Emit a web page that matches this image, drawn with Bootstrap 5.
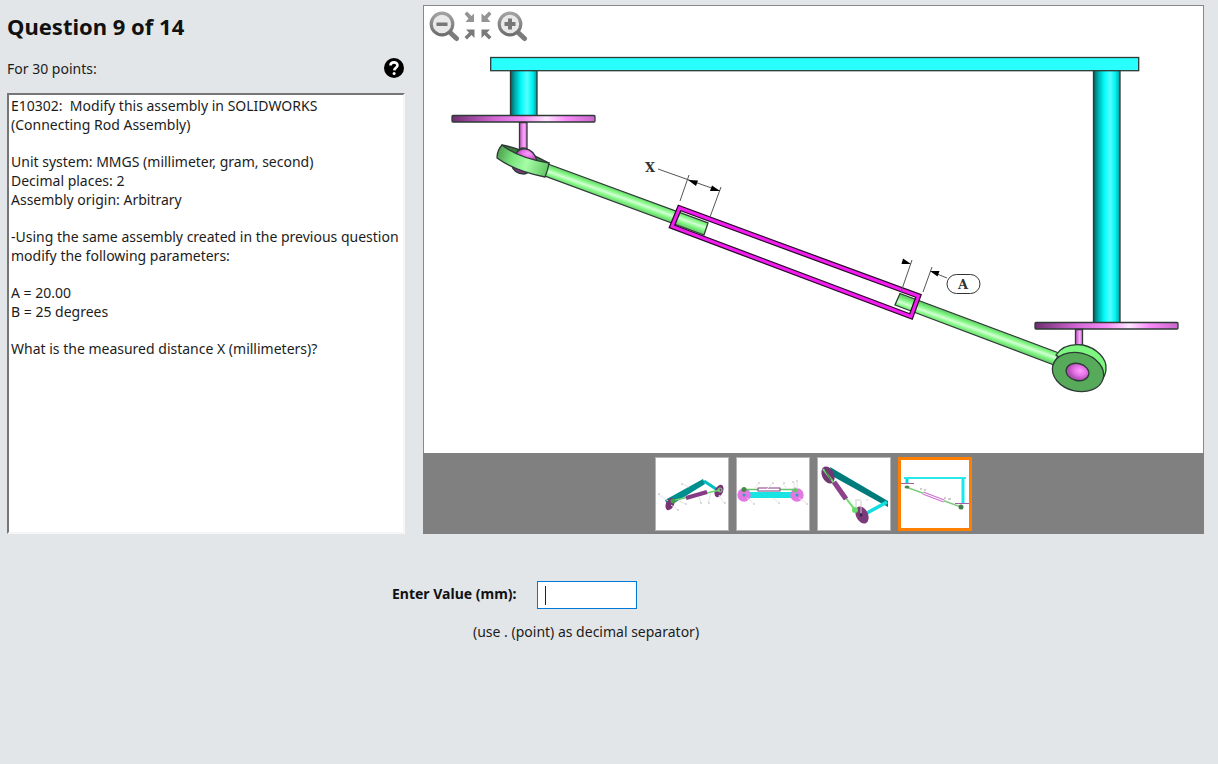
<!DOCTYPE html>
<html lang="en">
<head>
<meta charset="utf-8">
<meta name="viewport" content="width=device-width, initial-scale=1">
<title>Question 9 of 14</title>
<link href="https://cdn.jsdelivr.net/npm/bootstrap@5.3.0/dist/css/bootstrap.min.css" rel="stylesheet">
<style>
  body { background: #e2e6e9; color: #1c1c1c; font-family: "Segoe UI", "Noto Sans", "Open Sans", sans-serif; font-size: 14px; line-height: 19px; }
  .exam { display: grid; grid-template-columns: 398fr 781fr; column-gap: 18px; padding: 5px 14px 0 7px; }
  h1 { font-size: 22px; line-height: 30px; font-weight: 700; margin: 6px 0 0; color: #111; }
  .points-row { height: 30px; margin-top: 12px; margin-bottom: 10px; padding-right: 1px; }
  .tool { background: none; border: 0; padding: 0; line-height: 0; }
  .prompt { background: #fff; border: 2px solid; border-color: #767676 #f6f6f6 #f6f6f6 #767676; padding: 1px 2px 0 2px; }
  .prompt p { margin: 0 0 18px; }
  .viewer { background: #fff; border: 1px solid #888; border-bottom: 0; }
  .toolbar { height: 40px; padding: 4px 5px; gap: 3px; }
  .drawing { display: block; width: 100%; height: auto; }
  .strip { background: #808080; padding: 4px 0 3px; gap: 7px; margin: 0 -1px; }
  .thumb { width: 74px; height: 74px; padding: 0; background: #fff; border: 1px solid #b4b4b4; line-height: 0; }
  .thumb.current { border: 3px solid #ff8000; }
  .thumb svg { width: 100%; height: 100%; }
  .answer { margin: 47px 0 0 392px; }
  .answer label { width: 145px; padding-bottom: 3px; font-weight: 700; color: #111; }
  .answer input { width: 100px; height: 28px; padding: 0 7px; border: 1px solid #0078d7; border-radius: 0; font-size: 14px; outline: 0; background: #fff; }
  /* steady caret while the field is empty */
  .answer input:placeholder-shown { caret-color: transparent; background: linear-gradient(#222, #222) 7px 4px / 1px 19px no-repeat #fff; }
  .hint { margin: 13px 0 0 81px; }
</style>
</head>
<body>
<svg width="0" height="0" class="position-absolute" aria-hidden="true">
  <defs>
    <linearGradient id="pillar"><stop offset="0" stop-color="#005c5c"/><stop offset=".15" stop-color="#00a3a5"/><stop offset=".4" stop-color="#00fafa"/><stop offset=".62" stop-color="#55ffff"/><stop offset=".82" stop-color="#00f4f4"/><stop offset="1" stop-color="#009c9c"/></linearGradient>
    <linearGradient id="plate"><stop offset="0" stop-color="#6f2d70"/><stop offset=".3" stop-color="#d468d6"/><stop offset=".5" stop-color="#f58cf6"/><stop offset=".66" stop-color="#ffe6ff"/><stop offset=".8" stop-color="#fa8bfa"/><stop offset="1" stop-color="#c966ca"/></linearGradient>
    <linearGradient id="stem"><stop offset="0" stop-color="#b450b5"/><stop offset=".6" stop-color="#ffa8ff"/><stop offset="1" stop-color="#d468d6"/></linearGradient>
    <linearGradient id="rodL" gradientUnits="userSpaceOnUse" x1="625" y1="191" x2="620" y2="205"><stop offset="0" stop-color="#5cc95f"/><stop offset=".3" stop-color="#86f888"/><stop offset=".5" stop-color="#d4ffd4"/><stop offset=".7" stop-color="#84f886"/><stop offset="1" stop-color="#60c562"/></linearGradient>
    <linearGradient id="rodR" gradientUnits="userSpaceOnUse" x1="975" y1="321" x2="970" y2="335"><stop offset="0" stop-color="#5cc95f"/><stop offset=".3" stop-color="#86f888"/><stop offset=".5" stop-color="#d4ffd4"/><stop offset=".7" stop-color="#84f886"/><stop offset="1" stop-color="#60c562"/></linearGradient>
    <linearGradient id="ring" gradientUnits="userSpaceOnUse" x1="497" y1="152" x2="547" y2="170"><stop offset="0" stop-color="#4d9c4f"/><stop offset=".3" stop-color="#79e37b"/><stop offset=".6" stop-color="#a5fda6"/><stop offset="1" stop-color="#65c967"/></linearGradient>
    <radialGradient id="ball" cx=".6" cy=".4"><stop offset="0" stop-color="#ff9dff"/><stop offset=".55" stop-color="#e573e7"/><stop offset="1" stop-color="#b350b5"/></radialGradient>
    <linearGradient id="metal" x2="0" y2="1"><stop offset="0" stop-color="#a2a2a2"/><stop offset="1" stop-color="#6e6e6e"/></linearGradient>
  </defs>
</svg>

<main class="container-fluid p-0">
  <div class="exam">
    <section class="d-flex flex-column">
      <h1>Question 9 of 14</h1>
      <div class="points-row d-flex justify-content-between align-items-center">
        <span>For 30 points:</span>
        <button class="tool" type="button" aria-label="Help">
          <svg width="20" height="20" viewBox="0 0 20 20"><circle cx="10" cy="10" r="10" fill="#000"/><path d="M6.500 7.600C6.500 3.400 13.500 3.400 13.500 7.300C13.500 9.700 10.400 9.800 10.200 12.400" fill="none" stroke="#fff" stroke-width="2.600"/><circle cx="10.100" cy="15.400" r="1.500" fill="#fff"/></svg>
        </button>
      </div>
      <div class="prompt flex-grow-1">
        <p>E10302:&nbsp; Modify this assembly in SOLIDWORKS<br>(Connecting Rod Assembly)</p>
        <p>Unit system: MMGS (millimeter, gram, second)<br>Decimal places: 2<br>Assembly origin: Arbitrary</p>
        <p>-Using the same assembly created in the previous question modify the following parameters:</p>
        <p>A = 20.00<br>B = 25 degrees</p>
        <p>What is the measured distance X (millimeters)?</p>
      </div>
    </section>

    <section class="viewer">
      <div class="toolbar d-flex align-items-start">
        <button class="tool" type="button" aria-label="Zoom out">
          <svg width="31" height="32" viewBox="0 0 31 32"><path d="M20 21.500L27.500 28.500" stroke="#7c7c7c" stroke-width="5" stroke-linecap="round"/><circle cx="13" cy="14" r="10.800" fill="#e9e9e9" stroke="url(#metal)" stroke-width="3.200"/><rect x="7.500" y="12.500" width="11" height="3.500" fill="#777"/></svg>
        </button>
        <button class="tool" type="button" aria-label="Fit to view">
          <svg width="31" height="32" viewBox="0 0 31 32"><g fill="#949494"><path d="M1.500 4L4 1.500L8.500 6L11 3.500V12H2.500L5.500 8.500Z"/><path d="M28.500 4L26 1.500L21.500 6L18.500 3.500V12H27.500L24.500 8.500Z"/></g><g fill="#7a7a7a"><path d="M4 29.500L1.500 27L6 22.500L3 19.500H11.500V28L8.500 25Z"/><path d="M26 29.500L28.500 27L24 22.500L27 19.500H18.500V28L21.500 25Z"/></g></svg>
        </button>
        <button class="tool" type="button" aria-label="Zoom in">
          <svg width="31" height="32" viewBox="0 0 31 32"><path d="M20 21.500L27.500 28.500" stroke="#7c7c7c" stroke-width="5" stroke-linecap="round"/><circle cx="13" cy="14" r="10.800" fill="#e9e9e9" stroke="url(#metal)" stroke-width="3.200"/><path d="M7.500 14H18.500M13 8.500V19.500" stroke="#777" stroke-width="4"/></svg>
        </button>
      </div>
      <svg class="drawing" viewBox="424 46 779 407" role="img" aria-label="Connecting rod assembly with dimensions X and A">
        <g stroke="#2e3a36" stroke-width="1.300">
          <!-- frame bar, pillars and plates -->
          <rect x="510.500" y="70" width="26.500" height="46" fill="url(#pillar)"/>
          <rect x="1093.500" y="70" width="26.500" height="253" fill="url(#pillar)"/>
          <rect x="490.700" y="57.500" width="648" height="13.200" fill="#29ffff"/>
          <rect x="452" y="115.500" width="143" height="6.500" rx="1" fill="url(#plate)"/>
          <rect x="1035" y="322.500" width="143" height="6.500" rx="1" fill="url(#plate)"/>
          <!-- left joint -->
          <path d="M511 164Q514 174 524 174Q530 173 529 168Z" fill="#7b377d"/>
          <path d="M502 145Q520 148 549 163L545 168L499 155Z" fill="#3b7b3d"/>
          <path d="M515 157Q516 149 525 148.500Q534 150 537 161Q526 161 515 157Z" fill="url(#ball)"/>
          <path d="M519.500 122.500V149Q523 147 527 149V122.500Z" fill="url(#stem)"/>
          <!-- left rod and ring -->
          <path d="M548 164L708 223L704 235L545 176Z" fill="url(#rodL)"/>
          <path d="M502 145Q497 150 497 158Q515 171 545 177Q548 170 549 163Q518 158 502 145Z" fill="url(#ring)"/>
          <!-- right rod -->
          <path d="M900 293.500L1059 353L1054 365L895 305Z" fill="url(#rodR)"/>
          <path d="M1075.500 329.500V350H1082.500V329.500Z" fill="url(#stem)"/>
          <path d="M1056 355C1062 346 1072 343.500 1083 345C1096 348 1107 358 1106 369C1106 376 1102 380 1099 384Z" fill="#7df780"/>
          <ellipse cx="1078" cy="372" rx="26" ry="19.200" transform="rotate(14 1078 372)" fill="#57aa59"/>
          <ellipse cx="1077.500" cy="372" rx="11.500" ry="8.500" transform="rotate(14 1077.500 372)" fill="url(#ball)"/>
        </g>
        <!-- sleeve -->
        <g fill="none">
          <path d="M679.500 208L672 226.500L911 316.500L918.500 296Z" stroke="#2a0a2a" stroke-width="5.500"/>
          <path d="M679.500 208L672 226.500L911 316.500L918.500 296Z" stroke="#f31df0" stroke-width="3"/>
        </g>
        <!-- dimensions -->
        <g fill="none" stroke="#555" stroke-width="1">
          <path d="M658 169L720 191M689 175L680 201M721 187L710 217M912 260L901 292M932 267L923 292M932 272L947 278"/>
          <rect x="947" y="274.500" width="33" height="19" rx="9.500" stroke="#333"/>
        </g>
        <path d="M688 180L698 180.500L696 186Z M720 191L710 191L712 185.500Z M911 264L903 258.500L901.500 264Z M930 271L939.500 271L937.500 276.500Z" fill="#000"/>
        <g font-family="DejaVu Serif, serif" font-weight="700" font-size="13" fill="#333" text-anchor="middle">
          <text x="650" y="172">X</text>
          <text x="963" y="289">A</text>
        </g>
      </svg>
      <div class="strip d-flex justify-content-center">
        <button class="thumb" type="button" aria-label="View 1">
          <svg viewBox="0 0 72 72"><path d="M9 42L47 21L49 26L12 49Z" fill="#008f8f"/><path d="M48 23L63 33" stroke="#00bfc2" stroke-width="3"/><ellipse cx="63" cy="33" rx="4" ry="6.500" transform="rotate(25 63 33)" fill="#783576"/><ellipse cx="14" cy="46" rx="4" ry="6.500" transform="rotate(25 14 46)" fill="#783576"/><path d="M15 43L64 32" stroke="#66d569" stroke-width="1.500"/><path d="M30 40L51 34" stroke="#873a86" stroke-width="4"/><circle cx="17" cy="43" r="2.500" fill="#499d4c"/><circle cx="64" cy="32" r="2" fill="none" stroke="#7ae57c"/><path d="M2 36L12 43M26 26L33 29M29 46L22 42M45 45L43 39M52 45L55 35M68 45L63 37M22 52L15 47" stroke="#e4e4e4" fill="none"/><path d="M2 36h2M25 26h2M29 46h2M44 45h2M52 45h2M68 45h2M21 52h2" stroke="#bbb"/></svg>
        </button>
        <button class="thumb" type="button" aria-label="View 2">
          <svg viewBox="0 0 72 72"><rect x="7" y="34" width="53" height="6" fill="#18e4e4"/><circle cx="7" cy="37" r="6.700" fill="#e278e2"/><circle cx="60" cy="37" r="6.700" fill="#e278e2"/><path d="M7 31.500H60" stroke="#65c366" stroke-width="1.500"/><rect x="21" y="30" width="22" height="3" fill="#fff" stroke="#813c80"/><circle cx="7" cy="31.500" r="2.500" fill="#428b44"/><circle cx="58" cy="32" r="2.500" fill="#6bbf6d"/><circle cx="7" cy="37" r="1.500" fill="#3a9cc0"/><circle cx="60" cy="37" r="1.500" fill="#3a9cc0"/><path d="M21 25h2M35 25h2M46 25h2M55 24h2M59 23h2M16 46h2M41 45h2M69 46h2" stroke="#bbb"/><path d="M21 26L17 31M35 26L30 31M46 26L50 31M41 44L36 40M16 45L10 40M69 45L62 40M57 24V31M60 23V31" stroke="#e4e4e4"/></svg>
        </button>
        <button class="thumb" type="button" aria-label="View 3">
          <svg viewBox="0 0 72 72"><path d="M12 9L70 43V49L14 18Z" fill="#007b7c"/><path d="M69 44L49 55" stroke="#12dde0" stroke-width="3.500"/><ellipse cx="10" cy="17" rx="6" ry="9" transform="rotate(-25 10 17)" fill="#713770"/><ellipse cx="44" cy="57" rx="6" ry="9" transform="rotate(-25 44 57)" fill="#7b3b7a"/><path d="M5 11L38 53" stroke="#72dc74" stroke-width="2"/><path d="M16 24L28 41" stroke="#8c438c" stroke-width="5"/><path d="M7 12L13 22" stroke="#3c6f3f" stroke-width="1"/><circle cx="37" cy="52" r="3" fill="#65db68"/><path d="M37 42H43M48 42H50M38 43V50M43 43V55" stroke="#ccc"/><circle cx="43" cy="57" r="1.500" fill="#382442"/></svg>
        </button>
        <button class="thumb current" type="button" aria-label="View 4" aria-current="true">
          <svg viewBox="3 3 68 68"><path d="M6 21H68" stroke="#2ae7e9" stroke-width="2"/><path d="M9 22V26" stroke="#0cd8dc" stroke-width="3"/><path d="M65 22V46" stroke="#19e7ec" stroke-width="3"/><path d="M2 26.500H16M57 46.500H72" stroke="#a75ea8"/><path d="M8 30L63 50" stroke="#80cc81" stroke-width="1.500"/><path d="M25 36L46 44" stroke="#ce77d0" stroke-width="3"/><path d="M25 36L46 44" stroke="#fff" stroke-width="1"/><ellipse cx="9" cy="30" rx="2.500" ry="1.500" fill="#4c8750"/><circle cx="63" cy="50" r="2.500" fill="#477d4b"/><path d="M22 32h2M26 33h2M46 41h2M50 42h3" stroke="#999"/></svg>
        </button>
      </div>
    </section>
  </div>

  <form class="answer" onsubmit="return false">
    <div class="d-flex align-items-center">
      <label for="value">Enter Value (mm):</label>
      <input id="value" type="text" inputmode="decimal" autocomplete="off" placeholder=" " autofocus aria-describedby="hint">
    </div>
    <div class="hint" id="hint">(use . (point) as decimal separator)</div>
  </form>
</main>
<script src="https://cdn.jsdelivr.net/npm/bootstrap@5.3.0/dist/js/bootstrap.bundle.min.js"></script>
</body>
</html>
